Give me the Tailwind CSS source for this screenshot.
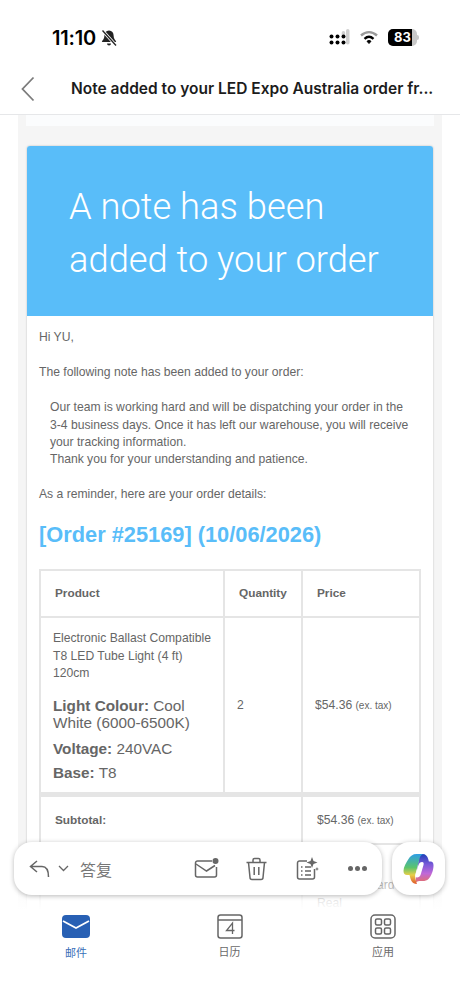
<!DOCTYPE html>
<html lang="en">

<head>
    <meta charset="UTF-8">
    <meta name="viewport" content="width=device-width, initial-scale=1.0">
    <title>Order note</title>
    <script src="https://cdn.jsdelivr.net/npm/@tailwindcss/browser@4"></script>
</head>

<body class="bg-white">
    <div class="relative w-[460px] h-[1000px] overflow-hidden bg-white flex flex-col font-['Liberation_Sans',sans-serif]">

        <!-- status bar -->
        <div class="h-[72px] shrink-0 flex items-start justify-between pt-[26px] pl-[52px] pr-[41px] text-black">
            <div class="flex items-center gap-[4px]">
                <span class="font-['Inter',sans-serif] font-semibold text-[20px] leading-[24px] tracking-[-0.2px]">11:10</span>
                <svg class="w-[18px] h-[18px]" viewBox="0 0 18 18" fill="#222">
                    <path d="M9 1.500c-3 0-4.600 2.200-4.600 5 0 3-1.400 4.400-2.400 5.600-.3.400 0 .9.400.9h13.200c.4 0 .7-.5.400-.9-1-1.200-2.400-2.600-2.400-5.600 0-2.800-1.600-5-4.600-5z"/>
                    <path d="M7 14.500h4a2 2 0 0 1-4 0z"/>
                    <path d="M2.500 1.500l13.500 15" stroke="#fff" stroke-width="3"/>
                    <path d="M2.500 1.500l13.500 15" stroke="#222" stroke-width="1.300"/>
                </svg>
            </div>
            <div class="flex items-center gap-[9px] pt-[3px]">
                <svg class="w-[23px] h-[17px]" viewBox="0 0 23 17">
                    <rect x="19" y="0" width="3.500" height="15.500" rx="1.700" fill="#d0d0d0"/>
                    <rect x="14.700" y="2" width="3.500" height="5" rx="1.700" fill="#d0d0d0"/>
                    <circle cx="4.500" cy="7.500" r="2"/>
                    <circle cx="10.500" cy="7.500" r="2"/>
                    <circle cx="16.500" cy="7.500" r="2"/>
                    <circle cx="4.500" cy="13.500" r="2"/>
                    <circle cx="10.500" cy="13.500" r="2"/>
                    <circle cx="16.500" cy="13.500" r="2"/>
                </svg>
                <svg class="w-[20px] h-[15px]" viewBox="0 0 20 15" fill="none" stroke="#000" stroke-width="2.400">
                    <path d="M2 5.500C7 1 13 1 18 5.500" stroke="#9a9a9a"/>
                    <path d="M5.500 8.800c3-2.600 6-2.600 9 0"/>
                    <path d="M10 13.500l-2-2.200c1.300-1 2.700-1 4 0z" fill="#000" stroke-width="1"/>
                </svg>
                <div class="flex items-center">
                    <div class="relative w-[29px] h-[17px] rounded-[5px] overflow-hidden bg-[#c8c8c8]">
                        <div class="absolute inset-y-0 left-0 w-[24px] bg-black"></div>
                        <div class="absolute inset-0 flex items-center justify-center text-white font-['Inter',sans-serif] font-bold text-[13px]">83</div>
                    </div>
                    <div class="w-[2px] h-[5px] bg-[#c8c8c8] rounded-r-sm"></div>
                </div>
            </div>
        </div>

        <!-- subject bar -->
        <div class="h-[43px] shrink-0 flex items-start border-b border-[#e6e7e9]">
            <svg class="w-[16px] h-[26px] ml-[20px] mt-[4px] shrink-0" viewBox="0 0 16 26" fill="none" stroke="#7b7b7b" stroke-width="1.800">
                <path d="M13.500 1.500L2.500 13l11 11.500"/>
            </svg>
            <div class="ml-[35px] pt-[7px] font-['Inter',sans-serif] font-semibold text-[15.500px] leading-[20px] text-[#1c1c1c] whitespace-nowrap">Note added to your LED Expo Australia order fr...</div>
        </div>

        <!-- message body -->
        <div class="flex-1 min-h-0 overflow-hidden mx-[18px] bg-[#f5f5f5] px-[8px]">
            <div class="h-[11px] bg-[#fbfcfd]"></div>
            <div class="mt-[20px] mx-[1px] bg-white rounded-t-[3px] shadow-[0_0_2px_rgba(0,0,0,0.25)] text-[#666] text-[12.150px] leading-[17.200px]">
                <div class="h-[170px] bg-[#59bdf9] rounded-t-[3px] pt-[34px] pl-[42px] text-white text-[36.300px] leading-[53px] font-['Roboto',sans-serif] font-light">
                    A note has been<br>added to your order
                </div>
                <div class="px-[12px] pt-[13px]">
                    <p>Hi YU,</p>
                    <p class="mt-[18px]">The following note has been added to your order:</p>
                    <p class="mt-[18px] pl-[11px]">Our team is working hard and will be dispatching your order in the<br>3-4 business days. Once it has left our warehouse, you will receive your tracking information.<br>Thank you for your understanding and patience.</p>
                    <p class="mt-[18px]">As a reminder, here are your order details:</p>
                    <h2 class="mt-[18px] font-bold text-[21.800px] leading-[28px] text-[#59bdf9]">[Order #25169] (10/06/2026)</h2>

                    <table class="mt-[20px] w-[382px] table-fixed border-collapse border-2 border-[#e5e5e5]">
                        <colgroup>
                            <col class="w-[184px]">
                            <col class="w-[78px]">
                            <col>
                        </colgroup>
                        <thead>
                            <tr class="h-[47px] text-left font-bold text-[11.800px]">
                                <th class="border-2 border-[#e5e5e5] pl-[14px]">Product</th>
                                <th class="border-2 border-[#e5e5e5] pl-[14px]">Quantity</th>
                                <th class="border-2 border-[#e5e5e5] pl-[14px]">Price</th>
                            </tr>
                        </thead>
                        <tbody>
                            <tr class="h-[177px]">
                                <td class="border-2 border-[#e5e5e5] pl-[12px] pr-[4px] align-top pt-[12px]">
                                    Electronic Ballast Compatible T8 LED Tube Light (4 ft) 120cm
                                    <div class="mt-[15px] text-[15.300px] leading-[17px]"><b>Light Colour:</b> Cool White (6000-6500K)</div>
                                    <div class="mt-[9px] text-[15.300px] leading-[17px]"><b>Voltage:</b> 240VAC</div>
                                    <div class="mt-[7px] text-[15.300px] leading-[17px]"><b>Base:</b> T8</div>
                                </td>
                                <td class="border-2 border-[#e5e5e5] pl-[12px]">2</td>
                                <td class="border-2 border-[#e5e5e5] pl-[12px]">$54.36 <span class="text-[10px]">(ex. tax)</span></td>
                            </tr>
                        </tbody>
                        <tfoot>
                            <tr class="h-[50px]">
                                <th colspan="2" class="border-2 border-t-[5px] border-[#e5e5e5] pl-[14px] text-left font-bold text-[11.800px]">Subtotal:</th>
                                <td class="border-2 border-t-[5px] border-[#e5e5e5] pl-[14px]">$54.36 <span class="text-[10px]">(ex. tax)</span></td>
                            </tr>
                            <tr class="h-[60px]">
                                <th colspan="2" class="border-2 border-[#e5e5e5] pl-[14px] text-left font-bold text-[11.800px]">Shipping:</th>
                                <td class="border-2 border-[#e5e5e5] pl-[14px] align-top pt-[32px]">Free Standard<br>Real</td>
                            </tr>
                        </tfoot>
                    </table>
                </div>
            </div>
        </div>

        <!-- tab bar -->
        <div class="h-[90px] shrink-0 flex items-start justify-between pl-[46px] pr-[47px] pt-[4px]">
            <div class="w-[60px] flex flex-col items-center gap-[7px] text-[#3a6fb8]">
                <svg class="w-[28px] h-[23px] mt-[1px]" viewBox="0 0 28 23">
                    <rect width="28" height="23" rx="4" fill="#2860b4"/>
                    <path d="M1 6l13 7 13-7" fill="none" stroke="#fff" stroke-width="1.800"/>
                </svg>
                <span class="text-[11px] leading-[14px] font-['Noto_Sans_CJK_SC',sans-serif]">邮件</span>
            </div>
            <div class="w-[60px] flex flex-col items-center gap-[5px] text-[#6a6a6a]">
                <svg class="w-[26px] h-[25px]" viewBox="0 0 26 25" fill="none" stroke="#666" stroke-width="1.500">
                    <rect x="1" y="1" width="24" height="23" rx="2.500"/>
                    <path d="M1 6h24"/>
                    <path d="M15.500 20v-11l-6 7.500h8" stroke-width="1.300"/>
                </svg>
                <span class="text-[11px] leading-[14px] font-['Noto_Sans_CJK_SC',sans-serif]">日历</span>
            </div>
            <div class="w-[60px] flex flex-col items-center gap-[5px] text-[#6a6a6a]">
                <svg class="w-[26px] h-[25px]" viewBox="0 0 26 25" fill="none" stroke="#666" stroke-width="1.500">
                    <rect x="1" y="1" width="24" height="23" rx="4"/>
                    <rect x="5.500" y="5" width="6" height="6" rx="1.500"/>
                    <rect x="14.500" y="5" width="6" height="6" rx="1.500"/>
                    <rect x="5.500" y="14" width="6" height="6" rx="1.500"/>
                    <rect x="14.500" y="14" width="6" height="6" rx="1.500"/>
                </svg>
                <span class="text-[11px] leading-[14px] font-['Noto_Sans_CJK_SC',sans-serif]">应用</span>
            </div>
        </div>

        <!-- message fades out behind the floating bars -->
        <div class="absolute left-0 right-0 top-[850px] h-[60px] bg-linear-to-b from-white/0 to-white"></div>

        <!-- floating reply toolbar, lies over the message -->
        <div class="absolute left-[14px] top-[842px] w-[368px] h-[53px] bg-white rounded-[18px] shadow-[0_1px_5px_rgba(0,0,0,0.28)] flex items-center pl-[15px] pr-[15px] text-[#666]">
            <svg class="w-[21px] h-[18px]" viewBox="0 0 21 18" fill="none" stroke="#666" stroke-width="1.500">
                <path d="M8 1L1.500 6.500 8 12M1.500 6.500H13c4 0 6.500 3 6.500 10.500"/>
            </svg>
            <svg class="ml-[8px] w-[11px] h-[7px]" viewBox="0 0 11 7" fill="none" stroke="#666" stroke-width="1.300">
                <path d="M1 1l4.500 4.500L10 1"/>
            </svg>
            <span class="ml-[11px] text-[16px] leading-[20px] font-['Noto_Sans_CJK_SC',sans-serif] text-[#777]">答复</span>
            <svg class="ml-auto w-[25px] h-[21px]" viewBox="0 0 25 21" fill="none" stroke="#666" stroke-width="1.500">
                <path d="M18 3H3.500A2 2 0 0 0 1.500 5v12a2 2 0 0 0 2 2h17a2 2 0 0 0 2-2V9"/>
                <path d="M2 6l10.500 7L21 7.500"/>
                <circle cx="21.500" cy="3" r="3" fill="#666" stroke="none"/>
            </svg>
            <svg class="ml-[26px] w-[23px] h-[24px]" viewBox="0 0 22 24" fill="none" stroke="#666" stroke-width="1.500">
                <path d="M1 5.500h20M7.500 5.500V3a1.500 1.500 0 0 1 1.500-1.500h4A1.500 1.500 0 0 1 14.500 3v2.500"/>
                <path d="M3 5.500l1.500 15a2 2 0 0 0 2 2h9a2 2 0 0 0 2-2l1.500-15"/>
                <path d="M8.700 10v8M13.300 10v8"/>
            </svg>
            <svg class="ml-[28px] w-[23px] h-[24px]" viewBox="0 0 23 24" fill="none" stroke="#666" stroke-width="1.500">
                <path d="M11 4H3.500a2 2 0 0 0-2 2v14a2 2 0 0 0 2 2h13a2 2 0 0 0 2-2v-8"/>
                <path d="M5 10h1.500M5 14h1.500M5 18h1.500M9 10h6M9 14h6M9 18h6"/>
                <path d="M16 0l1.500 4 4 1.500-4 1.500L16 11l-1.500-4-4-1.500 4-1.500z" fill="#666" stroke="none"/>
                <path d="M21 10l.6 1.400 1.400.6-1.400.6L21 14l-.6-1.400-1.400-.6 1.400-.6z" fill="#666" stroke="none"/>
            </svg>
            <div class="ml-[29px] flex gap-[2px]">
                <div class="w-[5px] h-[5px] rounded-full bg-[#666]"></div>
                <div class="w-[5px] h-[5px] rounded-full bg-[#666]"></div>
                <div class="w-[5px] h-[5px] rounded-full bg-[#666]"></div>
            </div>
        </div>

        <!-- copilot button -->
        <div class="absolute left-[392px] top-[842px] w-[53px] h-[53px] bg-white rounded-[18px] shadow-[0_1px_5px_rgba(0,0,0,0.28)] flex items-center justify-center">
            <svg class="w-[31px] h-[32px]" viewBox="0 0 30 32">
                <defs>
                    <linearGradient id="cpLeft" x1="0" y1="0" x2="0" y2="1">
                        <stop offset="0" stop-color="#2e9ee6"/>
                        <stop offset="0.45" stop-color="#5cc46c"/>
                        <stop offset="0.7" stop-color="#e8cf48"/>
                        <stop offset="1" stop-color="#e0562c"/>
                    </linearGradient>
                    <linearGradient id="cpRight" x1="0" y1="0" x2="0" y2="1">
                        <stop offset="0" stop-color="#1c3fb8"/>
                        <stop offset="0.35" stop-color="#7a5ad8"/>
                        <stop offset="0.65" stop-color="#c068d8"/>
                        <stop offset="1" stop-color="#e8705a"/>
                    </linearGradient>
                </defs>
                <path d="M16 1h3c3 0 5 2 5.700 5l.7 2.500H27c2 0 3 1.500 3 4 0 4.500-2 10.500-5 13.500-1.500 1.500-3.500 2-6 2h-3c-2 0-3.500 1-4.500 3z" fill="url(#cpRight)"/>
                <path d="M5 6c1.500-3 4.500-5 8-5h8c-3.500 0-4.500 2.500-5.200 5.500L12 21c-.7 3 0 7 1.500 10-4 0-6-3-6.700-6L6 22H3.500C1.300 22 0 20.500 0 18c0-4 2.500-8 5-12z" fill="url(#cpLeft)"/>
                <path d="M18.500 9c1.500 0 2 1 1.500 3l-2.800 9.500c-.5 2-2 3-3.700 3-1.500 0-2-1-1.500-3L15 12c.5-2 2-3 3.500-3z" fill="#fff"/>
            </svg>
        </div>
    </div>
</body>

</html>
